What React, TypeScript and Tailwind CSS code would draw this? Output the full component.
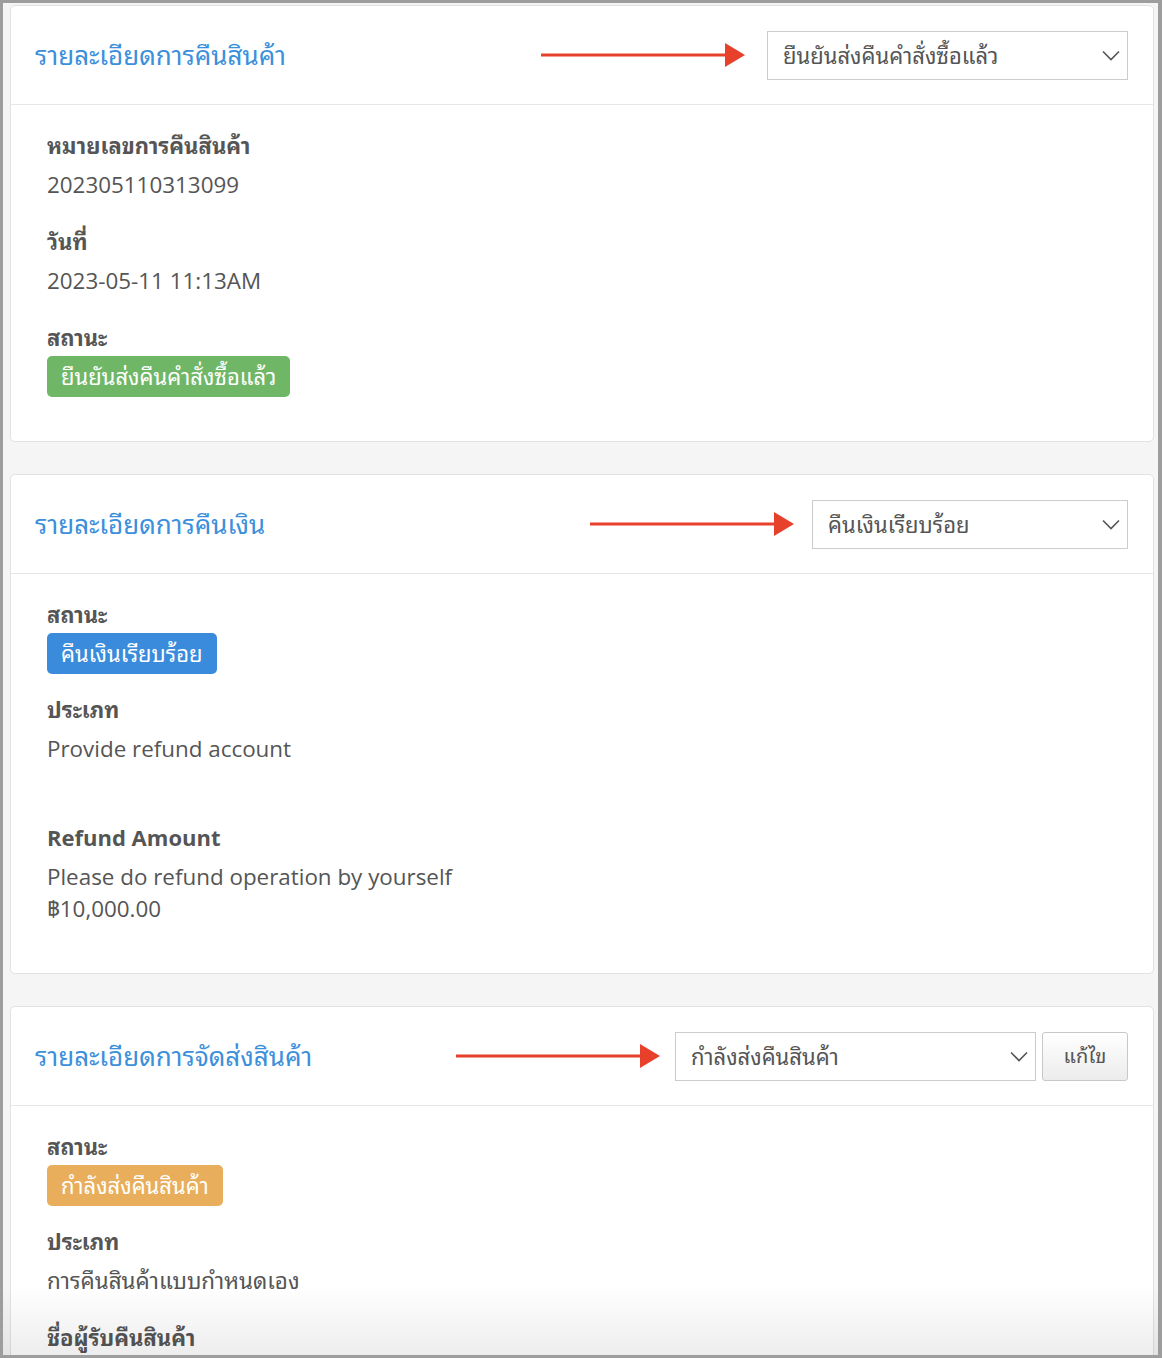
import { type ReactNode } from "react";

const FONT = {
  fontFamily:
    '"Open Sans", "Noto Sans Thai Looped", "Noto Sans", "Noto Sans Thai", Tahoma, sans-serif',
};

type BadgeTone = "green" | "blue" | "orange";

const BADGE_TONES: Record<BadgeTone, string> = {
  green: "bg-[#6fb767]",
  blue: "bg-[#3a8bdb]",
  orange: "bg-[#e8ae5b]",
};

function Arrow() {
  return (
    <svg width="204" height="26" viewBox="0 0 204 26" className="shrink-0">
      <line x1="0" y1="13" x2="186" y2="13" stroke="#e8412b" strokeWidth="3" />
      <polygon points="184,1 204,13 184,25" fill="#e8412b" />
    </svg>
  );
}

function Chevron() {
  return (
    <svg width="18" height="11" viewBox="0 0 18 11" className="shrink-0">
      <polyline points="1,1.5 9,9.5 17,1.5" fill="none" stroke="#555" strokeWidth="1.6" />
    </svg>
  );
}

function StatusSelect({ value, width }: { value: string; width: string }) {
  return (
    <div
      className={`flex h-[49px] items-center justify-between border border-[#cccccc] bg-white pl-[15px] pr-[7px] text-[22px] text-[#555] ${width}`}
    >
      <span>{value}</span>
      <Chevron />
    </div>
  );
}

function Badge({ tone, children }: { tone: BadgeTone; children: ReactNode }) {
  return (
    <span
      className={`mt-[4px] inline-flex h-[41px] items-center self-start rounded-[5px] px-[14px] text-[22px] text-white ${BADGE_TONES[tone]}`}
    >
      {children}
    </span>
  );
}

function Label({ children, className = "" }: { children: ReactNode; className?: string }) {
  return (
    <div className={`text-[22px] leading-[30px] font-bold text-[#555] ${className}`}>
      {children}
    </div>
  );
}

function Value({ children, className = "" }: { children: ReactNode; className?: string }) {
  return <div className={`text-[22.4px] leading-[32px] text-[#555] ${className}`}>{children}</div>;
}

function Card({
  title,
  actions,
  children,
  bodyClass = "pb-[44px]",
}: {
  title: string;
  actions: ReactNode;
  children: ReactNode;
  bodyClass?: string;
}) {
  return (
    <section className="rounded-[5px] border border-[#e2e2e2] bg-white">
      <header className="flex h-[99px] items-center border-b border-[#e6e6e6] pl-[24px] pr-[25px]">
        <h2 className="text-[26px] font-normal text-[#3b8fdb]">{title}</h2>
        <div className="ml-auto flex items-center">{actions}</div>
      </header>
      <div className={`flex flex-col pt-[25px] pl-[36px] ${bodyClass}`}>{children}</div>
    </section>
  );
}

export default function App() {
  return (
    <div
      style={FONT}
      className="relative h-[1358px] overflow-hidden border-t-[3px] border-r-[4px] border-b-[3px] border-l-[3px] border-[#9d9d9d] bg-[#f5f5f5]"
    >
      <div className="flex flex-col gap-[32px] pt-[2px] pr-[4px] pl-[7px]">
        <Card
          title="รายละเอียดการคืนสินค้า"
          actions={
            <>
              <Arrow />
              <div className="ml-[22px]">
                <StatusSelect value="ยืนยันส่งคืนคำสั่งซื้อแล้ว" width="w-[361px]" />
              </div>
            </>
          }
        >
          <Label>หมายเลขการคืนสินค้า</Label>
          <Value className="mt-[9px]">202305110313099</Value>
          <Label className="mt-[25px]">วันที่</Label>
          <Value className="mt-[9px]">2023-05-11 11:13AM</Value>
          <Label className="mt-[25px]">สถานะ</Label>
          <Badge tone="green">ยืนยันส่งคืนคำสั่งซื้อแล้ว</Badge>
        </Card>

        <Card
          title="รายละเอียดการคืนเงิน"
          bodyClass="pb-[48px]"
          actions={
            <>
              <Arrow />
              <div className="ml-[18px]">
                <StatusSelect value="คืนเงินเรียบร้อย" width="w-[316px]" />
              </div>
            </>
          }
        >
          <Label>สถานะ</Label>
          <Badge tone="blue">คืนเงินเรียบร้อย</Badge>
          <Label className="mt-[20px]">ประเภท</Label>
          <Value className="mt-[9px]">Provide refund account</Value>
          <Label className="mt-[57px] text-[22.4px]">Refund Amount</Label>
          <Value className="mt-[9px]">Please do refund operation by yourself</Value>
          <Value>฿10,000.00</Value>
        </Card>

        <Card
          title="รายละเอียดการจัดส่งสินค้า"
          actions={
            <>
              <Arrow />
              <div className="ml-[15px]">
                <StatusSelect value="กำลังส่งคืนสินค้า" width="w-[361px]" />
              </div>
              <button className="ml-[6px] h-[49px] w-[86px] rounded-[3px] border border-[#c8c8c8] bg-gradient-to-b from-white to-[#ececec] text-[20px] text-[#555]">
                แก้ไข
              </button>
            </>
          }
        >
          <Label>สถานะ</Label>
          <Badge tone="orange">กำลังส่งคืนสินค้า</Badge>
          <Label className="mt-[20px]">ประเภท</Label>
          <Value className="mt-[9px]">การคืนสินค้าแบบกำหนดเอง</Value>
          <Label className="mt-[25px]">ชื่อผู้รับคืนสินค้า</Label>
        </Card>
      </div>

      {/* scroll fade at the bottom edge */}
      <div className="pointer-events-none absolute inset-x-0 bottom-0 h-[70px] bg-gradient-to-b from-transparent to-[rgba(0,0,0,0.07)]" />
    </div>
  );
}
